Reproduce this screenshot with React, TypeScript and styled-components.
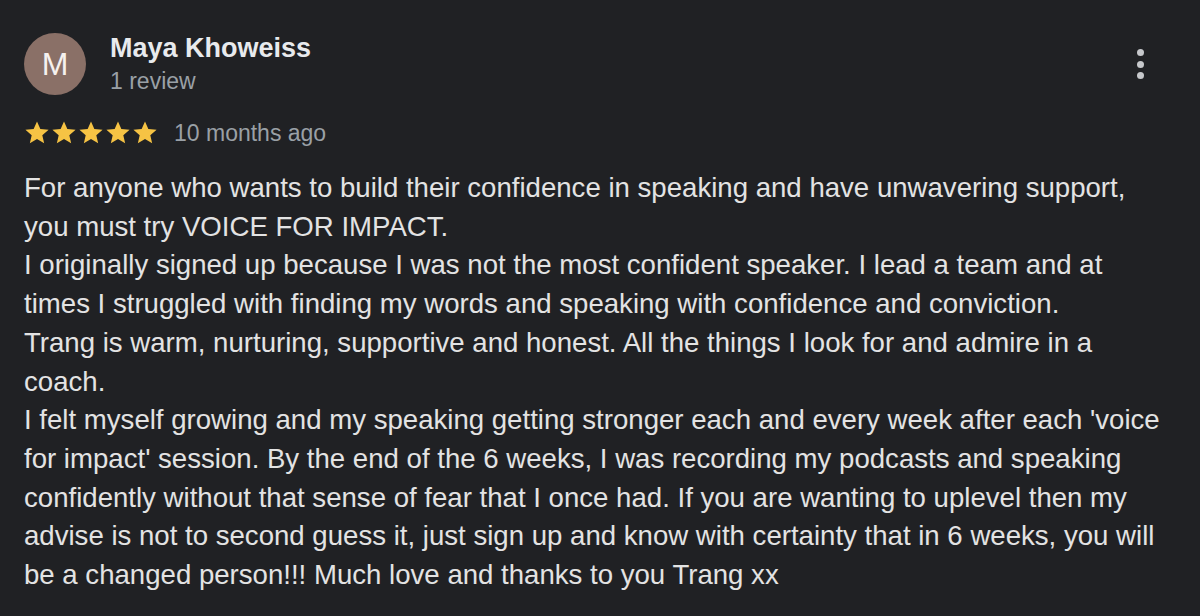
import { FC } from 'react';
import styled, { createGlobalStyle } from 'styled-components';

const GlobalStyle = createGlobalStyle`
	html, body {
		margin: 0;
		padding: 0;
		background: #202124;
	}
	body {
		font-family: 'Liberation Sans', Arial, sans-serif;
	}
`;

const Card = styled.div`
	width: 1200px;
	height: 616px;
	box-sizing: border-box;
	padding: 32px 24px 0 24px;
	background: #202124;
	color: #e3e3e3;
	overflow: hidden;
`;

const Header = styled.div`
	display: flex;
	align-items: flex-start;
`;

const Avatar = styled.div`
	width: 62px;
	height: 62px;
	margin-top: 1px;
	border-radius: 50%;
	background: #8a7067;
	color: #f6f1ef;
	display: flex;
	align-items: center;
	justify-content: center;
	font-size: 32px;
	flex-shrink: 0;
`;

const Author = styled.div`
	display: flex;
	flex-direction: column;
	margin-left: 24px;
	flex: 1;
`;

const Name = styled.div`
	font-size: 27px;
	font-weight: 700;
	color: #e8eaed;
	line-height: 32px;
`;

const Meta = styled.div`
	font-size: 23px;
	color: #9aa0a6;
	line-height: 34px;
`;

const MenuButton = styled.button`
	background: none;
	border: none;
	padding: 0;
	margin: 17px 26px 0 0;
	width: 20px;
	height: 30px;
	display: flex;
	flex-direction: column;
	align-items: center;
	justify-content: space-between;
	cursor: pointer;
`;

const Dot = styled.span`
	width: 7px;
	height: 7px;
	border-radius: 50%;
	background: #c6c8cb;
`;

const RatingRow = styled.div`
	display: flex;
	align-items: center;
	margin-top: 18px;
	gap: 16px;
`;

const Stars = styled.div`
	display: flex;
	gap: 1px;
`;

// line breaks follow the wrap of the original card
const Body = styled.p`
	margin: 19px 0 0 0;
	width: 1160px;
	font-size: 27.6px;
	line-height: 38.7px;
	color: #e3e3e3;
	white-space: pre-line;
`;

const Star: FC = () => (
	<svg width='26' height='26' viewBox='0 0 24 24'>
		<path
			fill='#f6c344'
			d='M12 1.3l3.1 7 7.6.7-5.8 5 1.7 7.5L12 17.6l-6.6 3.9 1.7-7.5-5.8-5 7.6-.7z'
		/>
	</svg>
);

const reviewLines = [
	'For anyone who wants to build their confidence in speaking and have unwavering support,',
	'you must try VOICE FOR IMPACT.',
	'I originally signed up because I was not the most confident speaker. I lead a team and at',
	'times I struggled with finding my words and speaking with confidence and conviction.',
	'Trang is warm, nurturing, supportive and honest. All the things I look for and admire in a',
	'coach.',
	"I felt myself growing and my speaking getting stronger each and every week after each 'voice",
	"for impact' session. By the end of the 6 weeks, I was recording my podcasts and speaking",
	'confidently without that sense of fear that I once had. If you are wanting to uplevel then my',
	'advise is not to second guess it, just sign up and know with certainty that in 6 weeks, you will',
	'be a changed person!!! Much love and thanks to you Trang xx',
];

const App = () => {
	return (
		<>
			<GlobalStyle />
			<Card>
				<Header>
					<Avatar>M</Avatar>
					<Author>
						<Name>Maya Khoweiss</Name>
						<Meta>1 review</Meta>
					</Author>
					<MenuButton aria-label='More'>
						<Dot />
						<Dot />
						<Dot />
					</MenuButton>
				</Header>
				<RatingRow>
					<Stars>
						{[0, 1, 2, 3, 4].map(i => (
							<Star key={i} />
						))}
					</Stars>
					<Meta>10 months ago</Meta>
				</RatingRow>
				<Body>{reviewLines.join('\n')}</Body>
			</Card>
		</>
	);
};

export default App;
